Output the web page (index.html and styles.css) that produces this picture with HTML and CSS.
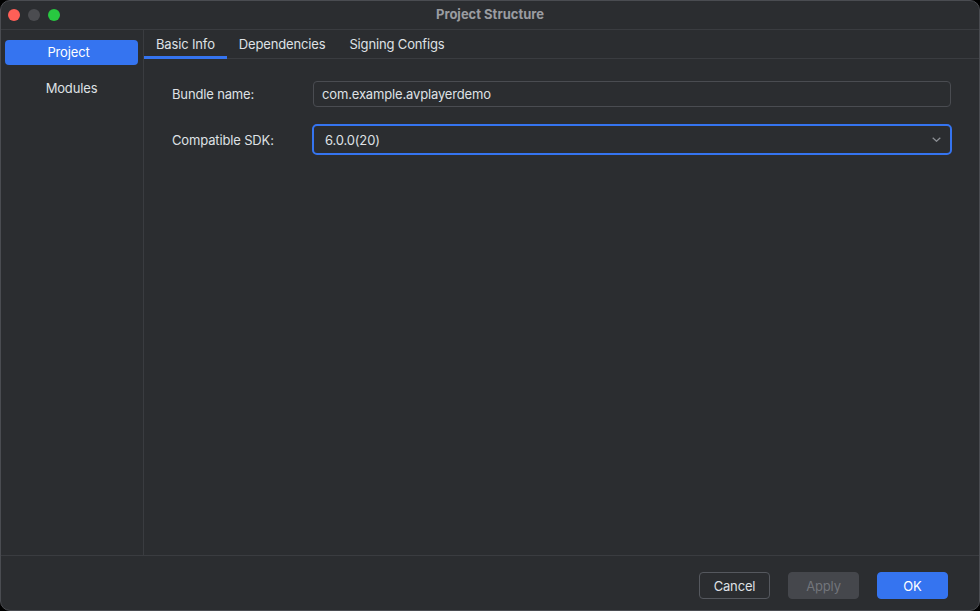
FILE: index.html
```html
<!DOCTYPE html>
<html lang="en">

<head>
  <meta charset="UTF-8">
  <meta name="viewport" content="width=device-width, initial-scale=1.0">
  <title>Project Structure</title>
  <link rel="stylesheet" href="styles.css">
</head>

<body>
  <div class="window">
    <div class="titlebar">
      <div class="lights">
        <span class="light red"></span>
        <span class="light grey"></span>
        <span class="light green"></span>
      </div>
      <div class="title">Project Structure</div>
    </div>

    <div class="main">
      <div class="sidebar">
        <div class="side-item active">Project</div>
        <div class="side-item">Modules</div>
      </div>

      <div class="content">
        <div class="tabs">
          <div class="tab active">Basic Info</div>
          <div class="tab">Dependencies</div>
          <div class="tab">Signing Configs</div>
        </div>

        <div class="form">
          <div class="row">
            <div class="label">Bundle name:</div>
            <div class="field">com.example.avplayerdemo</div>
          </div>
          <div class="row">
            <div class="label">Compatible SDK:</div>
            <div class="select">
              <span>6.0.0(20)</span>
              <svg class="chevron" width="9" height="5" viewBox="0 0 9 5">
                <path d="M0.7 0.7 L4.5 4.3 L8.3 0.7" fill="none" stroke="#8c8f94" stroke-width="1.2" />
              </svg>
            </div>
          </div>
        </div>
      </div>
    </div>

    <div class="footer">
      <button class="btn">Cancel</button>
      <button class="btn disabled">Apply</button>
      <button class="btn primary">OK</button>
    </div>
  </div>
</body>

</html>
```

FILE: styles.css
```css
* {
  box-sizing: border-box;
  margin: 0;
  padding: 0;
}

body {
  background-color: #000;
  font-family: Inter, "Noto Sans", sans-serif;
  font-size: 13px;
  letter-spacing: -0.15px;
  color: #dfe1e5;
}

.window {
  width: 980px;
  height: 611px;
  display: flex;
  flex-direction: column;
  background-color: #2b2d30;
  border: 1px solid #4a4c51;
  border-radius: 10px;
  overflow: hidden;
}

.titlebar {
  height: 29px;
  flex-shrink: 0;
  border-bottom: 1px solid #3a3c40;
  display: flex;
  align-items: center;
  position: relative;
}

.lights {
  display: flex;
  gap: 8px;
  padding-left: 7px;
}

.light {
  width: 12px;
  height: 12px;
  border-radius: 50%;
}

.red {
  background-color: #ff5f57;
}

.grey {
  background-color: #4b4c50;
}

.green {
  background-color: #28c840;
}

.title {
  position: absolute;
  left: 0;
  right: 0;
  top: 5px;
  text-align: center;
  font-weight: 700;
  letter-spacing: 0;
  color: #9a9ca1;
}

.main {
  flex: 1;
  display: flex;
  min-height: 0;
}

.sidebar {
  width: 143px;
  flex-shrink: 0;
  border-right: 1px solid #3a3c40;
  padding: 10px 5px 0 4px;
  display: flex;
  flex-direction: column;
  gap: 11px;
}

.side-item {
  height: 25px;
  line-height: 25px;
  text-align: center;
  border-radius: 4px;
  color: #dfe1e5;
}

.side-item.active {
  background-color: #3574f0;
  color: #fff;
  padding-right: 6px;
}

.content {
  flex: 1;
  display: flex;
  flex-direction: column;
}

.tabs {
  display: flex;
  height: 29px;
  box-shadow: inset 0 -1px 0 #3a3c40;
}

.tab {
  padding: 0 12px;
  line-height: 29px;
  color: #dfe1e5;
}

.tab.active {
  box-shadow: inset 0 -3px 0 #3574f0;
}

.form {
  padding: 22px 28px 0 28px;
  display: flex;
  flex-direction: column;
  gap: 17px;
}

.row {
  display: flex;
  align-items: center;
}

.label {
  width: 141px;
  flex-shrink: 0;
}

.field {
  flex: 1;
  height: 26px;
  line-height: 24px;
  border: 1px solid #4a4c51;
  border-radius: 4px;
  padding-left: 8px;
}

.select {
  flex: 1;
  height: 31px;
  margin: 0 -1px;
  border: 2px solid #3574f0;
  border-radius: 5px;
  padding: 0 9px 0 11px;
  display: flex;
  align-items: center;
  justify-content: space-between;
}

.footer {
  height: 55px;
  flex-shrink: 0;
  border-top: 1px solid #3a3c40;
  display: flex;
  justify-content: flex-end;
  gap: 18px;
  padding: 16px 31px 0 0;
}

.btn {
  width: 71px;
  height: 27px;
  border-radius: 4px;
  font-family: Inter, "Noto Sans", sans-serif;
  font-size: 13px;
  letter-spacing: -0.15px;
  color: #dfe1e5;
  background-color: transparent;
  border: 1px solid #55585e;
}

.btn.disabled {
  background-color: #45474c;
  border-color: #45474c;
  color: #72757b;
}

.btn.primary {
  background-color: #3574f0;
  border-color: #3574f0;
  color: #fff;
}
```
